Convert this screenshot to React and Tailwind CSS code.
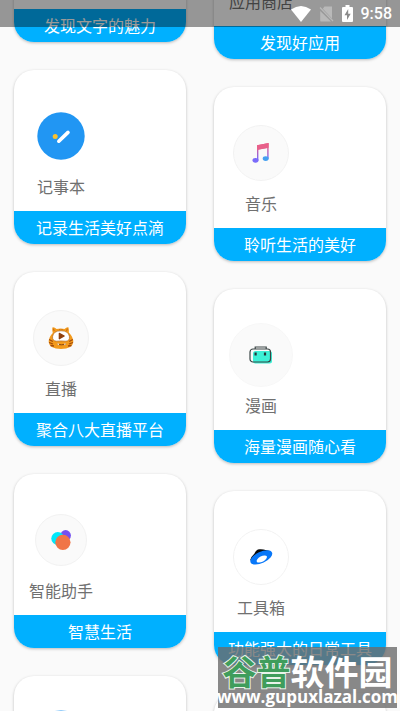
import React from 'react';

const NotebookIcon = () => (
  <svg viewBox="0 0 48 48" className="w-full h-full" aria-hidden="true">
    <circle cx="24" cy="24" r="23.7" fill="#2196f3" />
    <path d="M21.8 29.2 31 20.4" stroke="#fff" strokeWidth="3.6" strokeLinecap="round" />
    <circle cx="18.2" cy="24.6" r="2.5" fill="#fbc02d" />
  </svg>
);

const MusicIcon = () => (
  <svg viewBox="0 0 18 20" className="w-[18px] h-5" aria-hidden="true">
    <defs>
      <linearGradient id="stem" x1="0" y1="0" x2="0" y2="1">
        <stop offset="0.2" stopColor="#ea5a88" />
        <stop offset="0.9" stopColor="#7b6cf6" />
      </linearGradient>
    </defs>
    <path d="M5 2.2 16.6 0v15.6h-1.4V5L6.4 6.6v10.9H5z" fill="url(#stem)" />
    <path d="M5 2.2 16.6 0v4.8L5 7z" fill="#e8608a" />
    <ellipse cx="3.5" cy="17.3" rx="3" ry="2.4" fill="#7a6bfa" />
    <ellipse cx="13.7" cy="15.6" rx="3" ry="2.4" fill="#45a0f0" />
  </svg>
);

const LiveIcon = () => (
  <svg viewBox="0 0 26 24" className="w-[26px] h-6" aria-hidden="true">
    <path
      d="M4.4 1.4Q6.500 1 8.600 3Q13 2.200 16.500 3Q18.500 .8 20.400 1.200 21.200 4 20.800 6.500 25.300 11 25.300 16 24.600 23 13 23 1.300 23 .7 16 .7 11 4.800 7 3.800 4 4.400 1.400z"
      fill="#f39a1c"
    />
    <path d="M5.400 2.600 6.200 5M19.400 2.600 18.600 5M11.800 3v1.200M14 3v1.200" stroke="#b55a10" strokeWidth=".8" />
    <path d="M1.200 13.500 4.800 15.500M1 16.500 5 18M2.500 19.500 6 20M24.800 13.500 21.200 15.500M25 16.500 21 18M23.500 19.500 20 20" stroke="#a34b0c" strokeWidth="1.300" />
    <path d="M4.600 10.500Q5.500 4.800 13 4.800T21.400 10.500Q22 14.800 18 15.200 13 14.600 8.500 15.200 4 14.800 4.600 10.500z" fill="#fff" stroke="#a85c14" strokeWidth=".6" />
    <path d="M11.300 7.400 16.200 10 11.300 12.800z" fill="#8f3f0c" stroke="#8f3f0c" strokeWidth="1.200" strokeLinejoin="round" />
    <path d="M9.500 17.800Q10 18.800 13.500 18.800T18 17.800" fill="none" stroke="#7a3a0c" strokeWidth=".9" />
    <path d="m9 17.400 1.400 1.800.8-1.500zm7 .3.800 1.500 1.400-1.800z" fill="#fff" />
  </svg>
);

const ComicIcon = () => (
  <svg viewBox="0 0 24 18" className="w-6 h-[18px]" aria-hidden="true">
    <rect x="4" y="5" width="19" height="12.5" rx="2.5" fill="#3cf0d6" />
    <rect x="1" y="3" width="20.5" height="13" rx="3" fill="none" stroke="#3a4545" strokeWidth="1.2" />
    <path d="M6.2 3V1h11v2" fill="none" stroke="#3a4545" strokeWidth="1.2" />
    <path d="M6.6 6.5v3M16 6.5v3" stroke="#24343a" strokeWidth="2.2" />
  </svg>
);

const AssistantIcon = () => (
  <svg viewBox="0 0 20 20" className="w-5 h-5" aria-hidden="true">
    <circle cx="14.6" cy="5.4" r="5.3" fill="#7550f0" />
    <circle cx="6.8" cy="8.5" r="6.5" fill="#00e8fa" />
    <circle cx="11.9" cy="12.3" r="7.6" fill="#f07548" />
  </svg>
);

const ToolboxIcon = () => (
  <svg viewBox="0 0 24 18" className="w-6 h-[18px]" aria-hidden="true">
    <path d="M1 12.500Q2.500 8 5.500 5.500 7 1.400 10.500 1.200 14.500 1 16.500 2L21 3 12 9z" fill="#0b0b0b" />
    <ellipse cx="12.300" cy="9.400" rx="11.800" ry="5.600" transform="rotate(-25 12.300 9.400)" fill="#0877f8" />
    <ellipse cx="12.800" cy="11" rx="5.700" ry="2.700" transform="rotate(-28 12.800 11)" fill="#fff" />
  </svg>
);

const leftCards = [
  { slogan: '发现文字的魅力' },
  { name: '记事本', slogan: '记录生活美好点滴', icon: <NotebookIcon />, ring: 'w-12 h-12' },
  {
    name: '直播',
    slogan: '聚合八大直播平台',
    icon: <LiveIcon />,
    ring: 'w-14 h-14 bg-[#fafafa] border border-[#f2f2f2]',
  },
  {
    name: '智能助手',
    slogan: '智慧生活',
    icon: <AssistantIcon />,
    ring: 'w-13 h-13 bg-[#fafafa] border border-[#f2f2f2]',
  },
  { icon: <NotebookIcon />, ring: 'w-16 h-16' },
];

const rightCards = [
  { name: '应用商店', slogan: '发现好应用' },
  {
    name: '音乐',
    slogan: '聆听生活的美好',
    icon: <MusicIcon />,
    ring: 'w-14 h-14 bg-[#fafafa] border border-[#f2f2f2]',
  },
  {
    name: '漫画',
    slogan: '海量漫画随心看',
    icon: <ComicIcon />,
    ring: 'w-16 h-16 bg-[#fafafa] border border-[#f7f7f7]',
  },
  {
    name: '工具箱',
    slogan: '功能强大的日常工具',
    icon: <ToolboxIcon />,
    ring: 'w-14 h-14 bg-white border border-[#f2f2f2]',
  },
  {},
];

const Card = ({ name, slogan, icon, ring }) => (
  <a
    href="#"
    className="flex flex-col rounded-[20px] overflow-hidden bg-white shadow-[0_1px_3px_rgba(0,0,0,0.25)]"
  >
    <div className="flex flex-col items-center self-start w-[94px] h-[141px] pt-[34px]">
      <div className="flex items-center justify-center h-16">
        <div className={`flex items-center justify-center rounded-full ${ring || ''}`}>{icon}</div>
      </div>
      <span className="mt-1.5 text-base leading-6 text-[#707070] whitespace-nowrap">{name}</span>
    </div>
    <div className="h-[33px] text-center text-base leading-8 text-white bg-[#00b0ff]">{slogan}</div>
  </a>
);

const StatusBar = () => (
  <header className="absolute top-0 inset-x-0 h-[27px] px-2 flex items-center justify-end gap-2 bg-black/40 text-white">
    <svg viewBox="0 0 20 16" className="w-5 h-4" aria-hidden="true">
      <path d="M0 3.5Q10-3.5 20 3.5L10 16z" fill="#fff" />
    </svg>
    <svg viewBox="0 0 15 16" className="w-[15px] h-4" aria-hidden="true">
      <path d="M5.500 .5H13v12L3.800 2.800zM1.200 5v9.800q0 .7.700.7H12z" fill="#b9b9b9" />
      <path d="M1 1.5 14 15" stroke="#b9b9b9" strokeWidth="1.2" />
    </svg>
    <svg viewBox="0 0 11 17" className="w-[11px] h-[17px]" aria-hidden="true">
      <path d="M3.5 0h4v2H10q1 0 1 1v13q0 1-1 1H1q-1 0-1-1V3q0-1 1-1h2.5z" fill="#fff" />
      <path d="M6.2 4 2.5 10.2H5V15l3.7-6.2H6.2z" fill="#8b8b8b" />
    </svg>
    <time className="font-[Roboto,sans-serif] text-base font-medium">9:58</time>
  </header>
);

const Watermark = () => (
  <div className="absolute bottom-[3px] right-[3px] w-[179px] h-[61px] pt-2 flex flex-col items-center bg-[#6c6c6c]/80 text-white whitespace-nowrap">
    <p className="text-[34px] leading-8 font-bold">
      <span className="text-[#3f9d5c] [-webkit-text-stroke:2px_#e8f3ea] [paint-order:stroke_fill]">谷普</span>
      <span>软件园</span>
    </p>
    <p className="font-['Open_Sans',sans-serif] text-[17px] leading-5 font-bold">www.gupuxlazal.com</p>
  </div>
);

const App = () => {
  return (
    <div className="relative h-screen overflow-hidden bg-[#fafafa] font-['Noto_Sans_CJK_SC',sans-serif]">
      {/* list scrolled part of the way down, second column staggered */}
      <main className="grid grid-cols-2 gap-7 px-[14px] -mt-[132px]">
        <div className="flex flex-col gap-7">
          {leftCards.map((card, i) => (
            <Card key={i} {...card} />
          ))}
        </div>
        <div className="flex flex-col gap-7 mt-[17px]">
          {rightCards.map((card, i) => (
            <Card key={i} {...card} />
          ))}
        </div>
      </main>
      <StatusBar />
      <Watermark />
    </div>
  );
};

export default App;
